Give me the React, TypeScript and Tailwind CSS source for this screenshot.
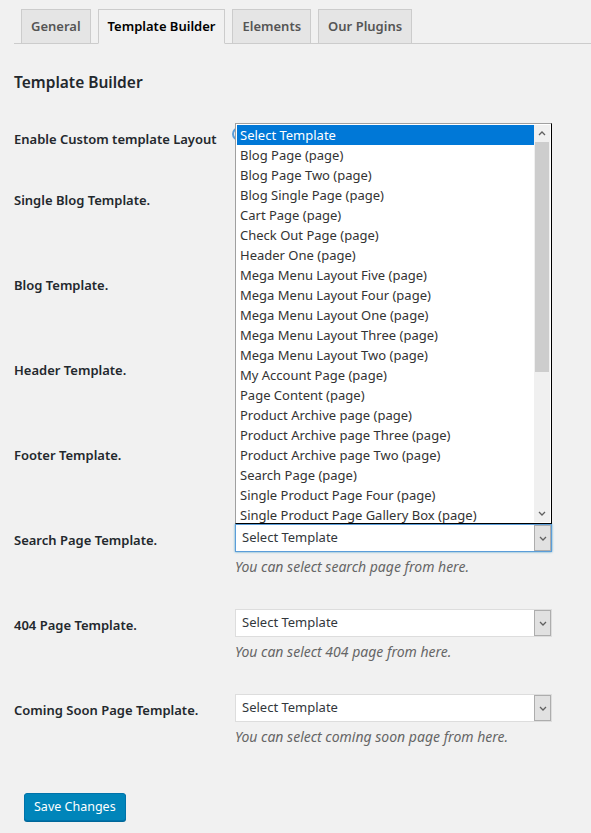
import React from "react";

const font = { fontFamily: '"Segoe UI", "Noto Sans", "Open Sans", sans-serif' };

const tabs = ["General", "Template Builder", "Elements", "Our Plugins"];

const options = [
  "Select Template",
  "Blog Page (page)",
  "Blog Page Two (page)",
  "Blog Single Page (page)",
  "Cart Page (page)",
  "Check Out Page (page)",
  "Header One (page)",
  "Mega Menu Layout Five (page)",
  "Mega Menu Layout Four (page)",
  "Mega Menu Layout One (page)",
  "Mega Menu Layout Three (page)",
  "Mega Menu Layout Two (page)",
  "My Account Page (page)",
  "Page Content (page)",
  "Product Archive page (page)",
  "Product Archive page Three (page)",
  "Product Archive page Two (page)",
  "Search Page (page)",
  "Single Product Page Four (page)",
  "Single Product Page Gallery Box (page)",
];

const Chevron = ({ up = false }: { up?: boolean }) => (
  <svg width="8" height="5" viewBox="0 0 8 5" className={up ? "rotate-180" : ""}>
    <path d="M1 1 L4 4 L7 1" fill="none" stroke="#606060" strokeWidth="1.3" />
  </svg>
);

const SelectBox = ({ focused = false }: { focused?: boolean }) => (
  <div
    className={`flex items-center w-[317px] h-[28px] bg-white border ${
      focused ? "border-[#5b9dd9] shadow-[0_0_2px_rgba(30,140,190,0.8)]" : "border-[#ddd]"
    }`}
  >
    <span className="flex-1 pl-[6px] text-[13px] text-[#32373c]">Select Template</span>
    <span className="w-[17px] h-full flex items-center justify-center bg-[#e1e1e1] border border-[#adadad]">
      <Chevron />
    </span>
  </div>
);

// open list of the focused select, drawn upward over the rows above it
const Dropdown = () => (
  <div className="absolute left-0 bottom-full w-[317px] h-[401px] bg-white border-t border-l border-t-[#a0a0a0] border-l-[#a0a0a0] border-r border-b border-r-black border-b-black flex p-px z-10">
    <div className="flex-1 flex flex-col">
      {options.map((o, i) => (
        <div
          key={o}
          className={`h-[20px] leading-[20px] pl-[3px] text-[13px] whitespace-nowrap ${
            i === 0 ? "bg-[#0078d7] text-white" : "text-[#333]"
          }`}
        >
          {o}
        </div>
      ))}
    </div>
    <div className="w-[16px] flex flex-col bg-[#f0f0f0]">
      <div className="h-[17px] flex items-center justify-center">
        <Chevron up />
      </div>
      <div className="h-[230px] mx-px bg-[#cdcdcd]" />
      <div className="flex-1" />
      <div className="h-[17px] flex items-center justify-center">
        <Chevron />
      </div>
    </div>
  </div>
);

type Row = { label: string; desc?: string; open?: boolean; hidden?: boolean };

const rows: Row[] = [
  { label: "Single Blog Template.", hidden: true },
  { label: "Blog Template.", hidden: true },
  { label: "Header Template.", hidden: true },
  { label: "Footer Template.", hidden: true },
  { label: "Search Page Template.", desc: "You can select search page from here.", open: true },
  { label: "404 Page Template.", desc: "You can select 404 page from here." },
  { label: "Coming Soon Page Template.", desc: "You can select coming soon page from here." },
];

export default function App() {
  return (
    <div className="min-h-[833px] bg-[#f1f1f1] text-[#23282d] pt-[9px]" style={font}>
      {/* tabs */}
      <div className="ml-[14px] flex items-end gap-[7px] pl-[7px] border-b border-[#ccc]">
        {tabs.map((t) => {
          const active = t === "Template Builder";
          return (
            <div
              key={t}
              className={`h-[35px] px-[9px] flex items-center text-[13px] font-semibold border border-[#ccc] -mb-px ${
                active ? "bg-[#f1f1f1] text-black border-b-[#f1f1f1]" : "bg-[#e5e5e5] text-[#555]"
              }`}
            >
              {t}
            </div>
          );
        })}
      </div>

      <div className="pl-[14px]">
        <h2 className="mt-[26px] text-[15.5px] font-semibold leading-[24px] text-[#23282d]">Template Builder</h2>

        {/* first row */}
        <div className="mt-[20px] h-[61px] flex">
          <div className="w-[221px] pt-[15px] text-[13px] font-semibold leading-[20px]">Enable Custom template Layout</div>
          <div className="pt-[13px]">
            <span className="block -ml-[3px] w-[14px] h-[14px] rounded-full border-2 border-[#5b9dd9]" />
          </div>
        </div>

        {rows.map((r) => (
          <div key={r.label} className="h-[85px] flex">
            <div className="w-[221px] pt-[15px] text-[13px] font-semibold leading-[20px]">{r.label}</div>
            {!r.hidden && (
              <div className="pt-[9px]">
                <div className="relative">
                  {r.open && <Dropdown />}
                  <SelectBox focused={r.open} />
                </div>
                {r.desc && (
                  <p className="mt-[5px] text-[14px] italic text-[#666] leading-[20px]">{r.desc}</p>
                )}
              </div>
            )}
          </div>
        ))}

        <button className="ml-[10px] mt-[23px] h-[28px] px-[9px] rounded-[3px] bg-[#0085ba] border border-[#0073aa] shadow-[0_1px_0_#006799] text-white text-[12.5px] leading-[26px]">
          Save Changes
        </button>
      </div>
    </div>
  );
}
